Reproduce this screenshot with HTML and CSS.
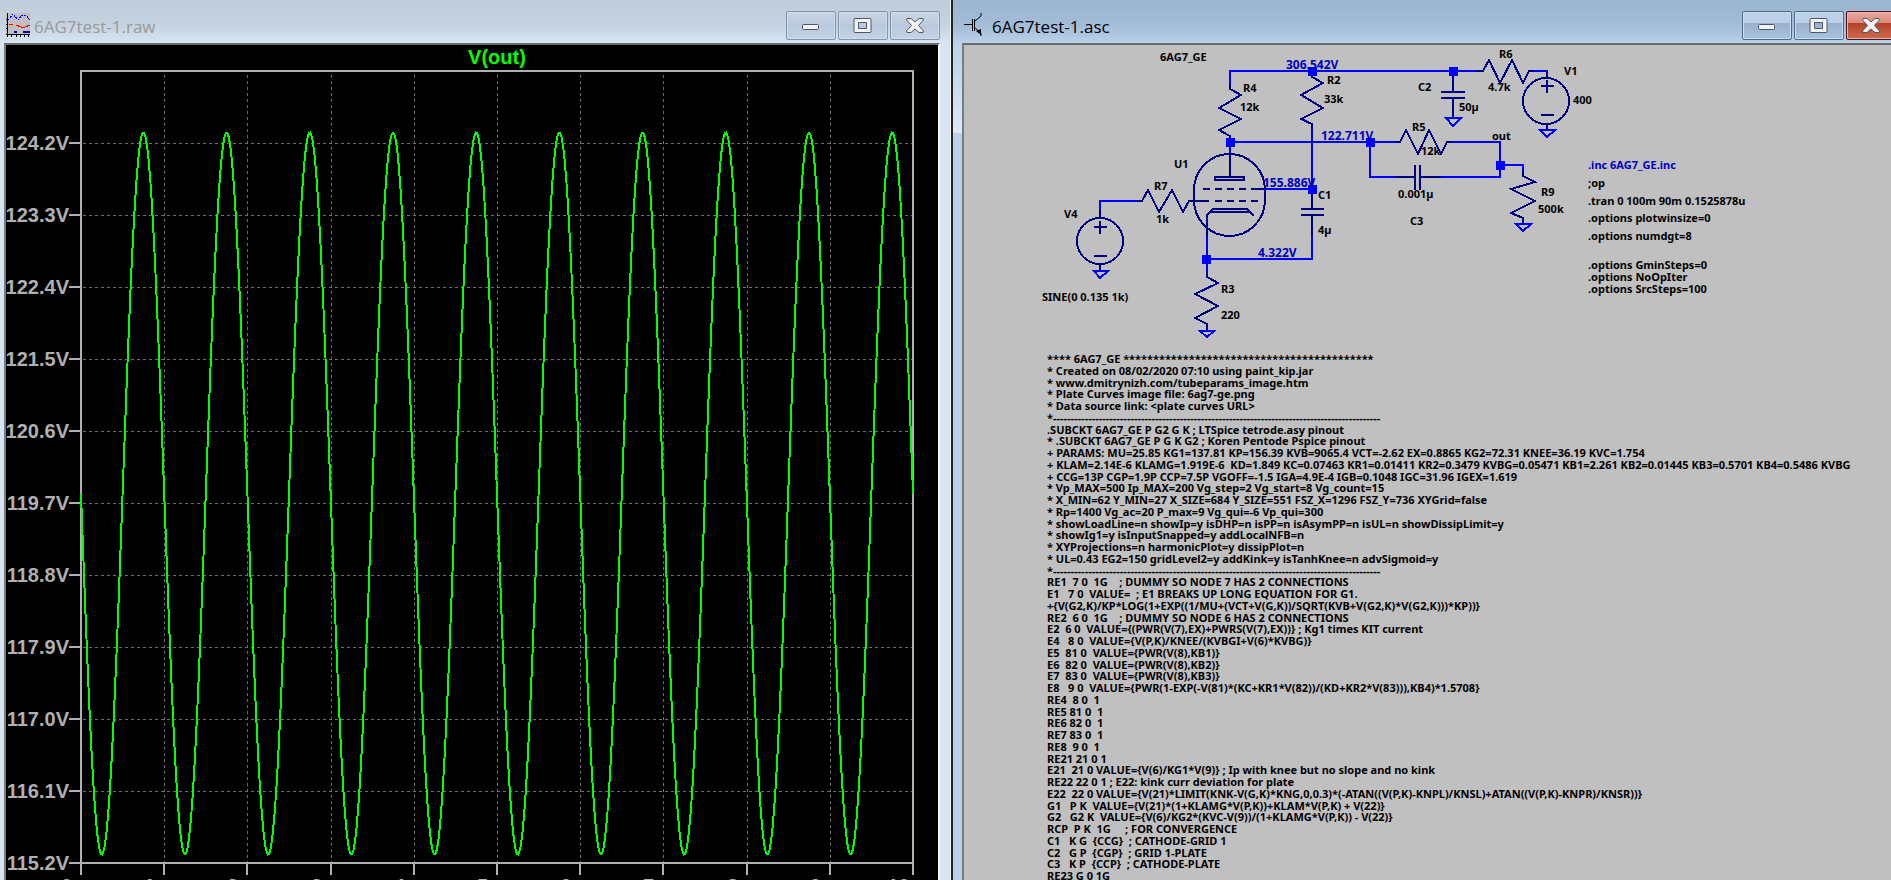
FILE: index.html
```html
<!DOCTYPE html>
<html lang="en">
  <head>
    <meta charset="utf-8" />
    <title>LTspice - 6AG7test-1</title>
    <link rel="stylesheet" href="styles.css">
  </head>
  <body>
    <div class="desktop">
      <section class="window inactive">
        <header class="titlebar">
          <svg class="icon" width="24" height="24" viewBox="0 0 24 24" shape-rendering="crispEdges">
            <rect width="24" height="22" fill="#c0c0c0" />
            <path d="M1.5 0V24M0 21.5H24M0 6.5H2M0 11.5H2M0 15.5H2M5.5 22V24M10.5 22V24M14.500 22V24M18.500 22V24M22.500 22V24" fill="none" stroke="#000" />
            <path d="M2 7L7 1L12 7L16 2H20L24 7" fill="none" stroke="#00f" stroke-dasharray="2 1" />
            <path d="M3 11.500H7M10 12L15 14H19L24 12" fill="none" stroke="#f00" />
            <path d="M8 19H11M17 19H24" fill="none" stroke="#00a" stroke-width="2" />
          </svg>
          <h1 class="title">6AG7test-1.raw</h1>
          <div class="buttons">
            <button type="button" aria-label="Minimize">
              <svg width="50" height="29" viewBox="0 0 50 29"><rect x="16.500" y="13.500" width="16" height="5" rx="1" /></svg>
            </button>
            <button type="button" aria-label="Maximize">
              <svg width="50" height="29" viewBox="0 0 50 29"><path fill-rule="evenodd" d="M17 7.500H32a1 1 0 0 1 1 1V20.500a1 1 0 0 1-1 1H17a1 1 0 0 1-1-1V8.500a1 1 0 0 1 1-1ZM20.500 11.500V17.500H28.500V11.500Z" /></svg>
            </button>
            <button type="button" aria-label="Close">
              <svg width="50" height="29" viewBox="0 0 50 29"><path d="M17 7.500H21L25 11L29 7.500H33L33.500 9L28.500 14.500L33.500 20L33 21.500H29L25 18L21 21.500H17L16.500 20L21.500 14.500L16.500 9Z" /></svg>
            </button>
          </div>
        </header>
        <div class="client plot">
          <svg id="plot" viewBox="6 45 932 860">
            <g id="grid" class="grid"></g>
            <g id="ticks" class="axis"></g>
            <rect class="axis" x="81" y="71" width="832" height="792" />
            <g id="labels" class="labels"></g>
            <path id="wave" class="wave" />
            <text class="trace" x="497" y="64">V(out)</text>
          </svg>
        </div>
      </section>

      <section class="window active">
        <header class="titlebar">
          <svg class="icon" width="24" height="24" viewBox="0 0 24 24" fill="none" stroke="#000">
            <path d="M0 11.500H8M8.500 6V18M10.500 6V18M11 8L17 3V0M11 15L17 20V23" />
            <path d="M12 18L17 16V22Z" fill="#000" stroke="none" />
          </svg>
          <h1 class="title">6AG7test-1.asc</h1>
          <div class="buttons">
            <button type="button" aria-label="Minimize">
              <svg width="50" height="29" viewBox="0 0 50 29"><rect x="16.500" y="13.500" width="16" height="5" rx="1" /></svg>
            </button>
            <button type="button" aria-label="Maximize">
              <svg width="50" height="29" viewBox="0 0 50 29"><path fill-rule="evenodd" d="M17 7.500H32a1 1 0 0 1 1 1V20.500a1 1 0 0 1-1 1H17a1 1 0 0 1-1-1V8.500a1 1 0 0 1 1-1ZM20.500 11.500V17.500H28.500V11.500Z" /></svg>
            </button>
            <button type="button" class="close" aria-label="Close">
              <svg width="50" height="29" viewBox="0 0 50 29"><path d="M17 7.500H21L25 11L29 7.500H33L33.500 9L28.500 14.500L33.500 20L33 21.500H29L25 18L21 21.500H17L16.500 20L21.500 14.500L16.500 9Z" /></svg>
            </button>
          </div>
        </header>
        <div class="client sheet">
          <svg class="schematic" width="936" height="300" viewBox="964 45 936 300">
            <!-- wires -->
            <path class="wire" d="M1230 85V71H1477M1534 71H1547V77M1230 142H1396M1312 124V189H1265M1312 235V259H1207M1370 142V177H1395M1441 177H1500V142H1453M1500 165H1523V171M1100 217V201H1137M1207 235V277M1230 142V155" />
            <!-- resistors R4 R2 R5 R6 R7 R9 R3 -->
            <path class="part" d="M1230 84V89L1241 95L1219 108L1241 119L1219 130L1230 136V142" />
            <path class="part" d="M1312 71V77L1323 83L1301 95L1323 108L1301 119L1312 124V129" />
            <path class="part" d="M1395 142H1400L1406 130L1418 154L1429 130L1441 154L1447 142H1453" />
            <path class="part" d="M1477 71H1483L1489 60L1500 83L1512 60L1523 83L1529 71H1534" />
            <path class="part" d="M1137 201H1142L1148 190L1159 212L1172 190L1183 212L1189 201H1209" />
            <path class="part" d="M1523 171V176L1535 182L1511 189L1535 201L1511 213L1523 218V223" />
            <path class="part" d="M1207 272V277L1218 283L1195 294L1218 306L1195 318L1207 324V330" />
            <!-- capacitors C2 C1 C3 -->
            <path class="part" d="M1453 71V92M1441 92H1465M1441 98H1465M1453 98V118" />
            <path class="part" d="M1312 189V209M1301 209H1324M1301 215H1324M1312 215V236" />
            <path class="part" d="M1395 177H1415M1415 165V190M1420 165V190M1420 177H1441" />
            <!-- sources V1 V4 -->
            <circle class="part" cx="1546" cy="101" r="23" />
            <path class="part" d="M1547 71V78M1541 86H1554M1547 80V93M1541 115H1554M1547 123V129" />
            <circle class="part" cx="1100" cy="241" r="23" />
            <path class="part" d="M1100 210V218M1094 227H1107M1100 221V234M1094 256H1107M1100 264V270" />
            <!-- tube U1 -->
            <rect class="part" x="1194" y="154" width="71" height="82" rx="36" />
            <path class="part" d="M1230 154V176M1215 177H1244V180H1215ZM1203 189H1210M1215 189H1222M1227 189H1234M1239 189H1246M1251 189H1265M1215 201H1222M1227 201H1234M1239 201H1246M1251 201H1258" />
            <path class="part" d="M1207 236V215L1213 209H1247L1249 212H1210M1247 209L1254 216" />
            <!-- grounds -->
            <path class="ground" d="M1446 118H1461L1453 126ZM1540 130H1555L1547 137ZM1516 224H1531L1523 231ZM1200 331H1214L1207 337ZM1094 271H1108L1100 278Z" />
            <!-- junctions -->
            <path class="node" d="M1308 67h9v9h-9zM1449 67h9v9h-9zM1226 138h9v9h-9zM1366 138h9v9h-9zM1308 185h9v9h-9zM1496 161h9v9h-9zM1202 255h9v9h-9z" />

            <g class="volt">
              <text x="1286" y="69">306.542V</text>
              <text x="1321" y="140">122.711V</text>
              <text x="1263" y="187">155.886V</text>
              <text x="1258" y="257">4.322V</text>
            </g>
            <g class="name">
              <text x="1160" y="61">6AG7_GE</text>
              <text x="1243" y="92">R4</text>
              <text x="1240" y="111">12k</text>
              <text x="1327" y="84">R2</text>
              <text x="1324" y="103">33k</text>
              <text x="1418" y="91">C2</text>
              <text x="1459" y="111">50µ</text>
              <text x="1499" y="58">R6</text>
              <text x="1488" y="91">4.7k</text>
              <text x="1564" y="75">V1</text>
              <text x="1573" y="104">400</text>
              <text x="1412" y="131">R5</text>
              <text x="1421" y="155">12k</text>
              <text x="1492" y="140">out</text>
              <text x="1398" y="198">0.001µ</text>
              <text x="1410" y="225">C3</text>
              <text x="1174" y="168">U1</text>
              <text x="1154" y="190">R7</text>
              <text x="1156" y="223">1k</text>
              <text x="1318" y="199">C1</text>
              <text x="1318" y="234">4µ</text>
              <text x="1541" y="196">R9</text>
              <text x="1538" y="213">500k</text>
              <text x="1064" y="218">V4</text>
              <text x="1042" y="301">SINE(0 0.135 1k)</text>
              <text x="1221" y="293">R3</text>
              <text x="1221" y="319">220</text>
              <text class="include" x="1588" y="169">.inc 6AG7_GE.inc</text>
              <text x="1588" y="187">;op</text>
              <text x="1588" y="205">.tran 0 100m 90m 0.1525878u</text>
              <text x="1588" y="222">.options plotwinsize=0</text>
              <text x="1588" y="240">.options numdgt=8</text>
              <text x="1588" y="269">.options GminSteps=0</text>
              <text x="1588" y="281">.options NoOpIter</text>
              <text x="1588" y="293">.options SrcSteps=100</text>
            </g>
          </svg>
          <div class="netlist">
            <div>**** 6AG7_GE ******************************************</div>
            <div>* Created on 08/02/2020 07:10 using paint_kip.jar</div>
            <div>* www.dmitrynizh.com/tubeparams_image.htm</div>
            <div>* Plate Curves image file: 6ag7-ge.png</div>
            <div>* Data source link: &lt;plate curves URL&gt;</div>
            <div>*---------------------------------------------------------------------------------------------</div>
            <div>.SUBCKT 6AG7_GE P G2 G K ; LTSpice tetrode.asy pinout</div>
            <div>* .SUBCKT 6AG7_GE P G K G2 ; Koren Pentode Pspice pinout</div>
            <div>+ PARAMS: MU=25.85 KG1=137.81 KP=156.39 KVB=9065.4 VCT=-2.62 EX=0.8865 KG2=72.31 KNEE=36.19 KVC=1.754</div>
            <div>+ KLAM=2.14E-6 KLAMG=1.919E-6  KD=1.849 KC=0.07463 KR1=0.01411 KR2=0.3479 KVBG=0.05471 KB1=2.261 KB2=0.01445 KB3=0.5701 KB4=0.5486 KVBG</div>
            <div>+ CCG=13P CGP=1.9P CCP=7.5P VGOFF=-1.5 IGA=4.9E-4 IGB=0.1048 IGC=31.96 IGEX=1.619</div>
            <div>* Vp_MAX=500 Ip_MAX=200 Vg_step=2 Vg_start=8 Vg_count=15</div>
            <div>* X_MIN=62 Y_MIN=27 X_SIZE=684 Y_SIZE=551 FSZ_X=1296 FSZ_Y=736 XYGrid=false</div>
            <div>* Rp=1400 Vg_ac=20 P_max=9 Vg_qui=-6 Vp_qui=300</div>
            <div>* showLoadLine=n showIp=y isDHP=n isPP=n isAsymPP=n isUL=n showDissipLimit=y</div>
            <div>* showIg1=y isInputSnapped=y addLocalNFB=n</div>
            <div>* XYProjections=n harmonicPlot=y dissipPlot=n</div>
            <div>* UL=0.43 EG2=150 gridLevel2=y addKink=y isTanhKnee=n advSigmoid=y</div>
            <div>*---------------------------------------------------------------------------------------------</div>
            <div>RE1  7 0  1G    ; DUMMY SO NODE 7 HAS 2 CONNECTIONS</div>
            <div>E1   7 0  VALUE=  ; E1 BREAKS UP LONG EQUATION FOR G1.</div>
            <div>+{V(G2,K)/KP*LOG(1+EXP((1/MU+(VCT+V(G,K))/SQRT(KVB+V(G2,K)*V(G2,K)))*KP))}</div>
            <div>RE2  6 0  1G    ; DUMMY SO NODE 6 HAS 2 CONNECTIONS</div>
            <div>E2  6 0  VALUE={(PWR(V(7),EX)+PWRS(V(7),EX))} ; Kg1 times KIT current</div>
            <div>E4   8 0  VALUE={V(P,K)/KNEE/(KVBGI+V(6)*KVBG)}</div>
            <div>E5  81 0  VALUE={PWR(V(8),KB1)}</div>
            <div>E6  82 0  VALUE={PWR(V(8),KB2)}</div>
            <div>E7  83 0  VALUE={PWR(V(8),KB3)}</div>
            <div>E8   9 0  VALUE={PWR(1-EXP(-V(81)*(KC+KR1*V(82))/(KD+KR2*V(83))),KB4)*1.5708}</div>
            <div>RE4  8 0  1</div>
            <div>RE5 81 0  1</div>
            <div>RE6 82 0  1</div>
            <div>RE7 83 0  1</div>
            <div>RE8  9 0  1</div>
            <div>RE21 21 0 1</div>
            <div>E21  21 0 VALUE={V(6)/KG1*V(9)} ; Ip with knee but no slope and no kink</div>
            <div>RE22 22 0 1 ; E22: kink curr deviation for plate</div>
            <div>E22  22 0 VALUE={V(21)*LIMIT(KNK-V(G,K)*KNG,0,0.3)*(-ATAN((V(P,K)-KNPL)/KNSL)+ATAN((V(P,K)-KNPR)/KNSR))}</div>
            <div>G1   P K  VALUE={V(21)*(1+KLAMG*V(P,K))+KLAM*V(P,K) + V(22)}</div>
            <div>G2   G2 K  VALUE={V(6)/KG2*(KVC-V(9))/(1+KLAMG*V(P,K)) - V(22)}</div>
            <div>RCP  P K  1G     ; FOR CONVERGENCE</div>
            <div>C1   K G  {CCG}  ; CATHODE-GRID 1</div>
            <div>C2   G P  {CGP}  ; GRID 1-PLATE</div>
            <div>C3   K P  {CCP}  ; CATHODE-PLATE</div>
            <div>RE23 G 0 1G</div>
          </div>
        </div>
      </section>
    </div>
    <script src="script.js"></script>
  </body>
</html>
```
FILE: styles.css
```css
* {
  box-sizing: border-box;
}
body {
  margin: 0;
  background: #000;
  font-family: "Noto Sans", "Open Sans", sans-serif;
  overflow: hidden;
}
.desktop {
  display: grid;
  grid-template-columns: 951fr 940fr;
  height: 100vh;
  overflow: hidden;
}
.window {
  display: flex;
  flex-direction: column;
  min-width: 0;
  height: 100vh;
}
.inactive {
  padding: 0 10px 0 4px;
  background: linear-gradient(#bfcddb, #c6d3e0 26px, #d7e4f2 43px);
  border-right: 1px solid #eef3f9;
}
.active {
  padding-left: 9px;
  margin-right: -15px;
  border-left: 2px solid #222;
  background: linear-gradient(#9ab4d1, #a4bdd8 26px, #b9d1ea 43px, #dde8f5 133px, #b9d1ea 133px);
}
.titlebar {
  display: flex;
  flex: none;
  align-items: flex-start;
  height: 43px;
}
.icon {
  flex: none;
  margin: 13px 4px 0 2px;
}
.title {
  flex: 1;
  margin: 14px 0 0;
  font: 17px/26px "Open Sans", sans-serif;
  color: #000;
}
.inactive .title {
  color: #999;
}
.buttons {
  display: flex;
  gap: 2px;
  margin-top: 11px;
}
.active .buttons {
  margin-right: 10px;
}
.buttons button {
  width: 50px;
  height: 29px;
  padding: 0;
  border: 1px solid #8294ad;
  border-radius: 2px;
  background: linear-gradient(#c6d4e4, #bdcbde 50%, #b9c8dc 50%, #c4d3e6);
  box-shadow: inset 0 0 0 1px #cfdcea;
}
.buttons svg {
  display: block;
  margin: -1px;
  fill: #f4f4f4;
  stroke: #50566a;
  stroke-width: 1px;
}
.active .buttons button {
  border-color: #536b8a;
  background: linear-gradient(#bfd3e8, #b9cfe6 40%, #98b0cd 40%, #a9c3de);
  box-shadow: inset 0 0 0 1px #c9dcef;
}
.active .buttons .close {
  border-color: #431422;
  background: linear-gradient(#e8a79c, #dd8a7c 40%, #b53f28 40%, #cf6a50);
  box-shadow: inset 0 0 0 1px #eab5a8;
}
.client {
  flex: 1;
  min-height: 0;
  overflow: hidden;
  border-top: 2px solid #6b6b6b;
  border-left: 2px solid #7b7b7b;
}
.plot {
  background: #000;
  border-right: 2px solid #f4f4f4;
}
.sheet {
  background: #c0c0c0;
}
#plot {
  display: block;
  width: 100%;
}
.grid {
  stroke: #707070;
  stroke-dasharray: 3 3;
  shape-rendering: crispEdges;
}
.axis {
  fill: none;
  stroke: #b0b0b0;
  stroke-width: 2px;
  shape-rendering: crispEdges;
}
.labels,
.trace {
  font: bold 20px "Liberation Sans", Arial, sans-serif;
  fill: #b0b0b0;
}
.trace {
  fill: #00ff00;
  text-anchor: middle;
}
.labels .volts {
  text-anchor: end;
}
.labels .time {
  text-anchor: middle;
}
.wave {
  fill: none;
  stroke: #00ff00;
  stroke-width: 2px;
  shape-rendering: crispEdges;
}
.schematic {
  display: block;
}
.wire,
.part,
.ground {
  fill: none;
  stroke: #0000ff;
  stroke-width: 2px;
  shape-rendering: crispEdges;
}
.part {
  stroke: #000080;
}
.node {
  fill: #0000ff;
}
.name,
.volt {
  font: bold 11px "Noto Sans", sans-serif;
}
.volt {
  font-size: 12px;
}
.volt,
.include {
  fill: #0000c0;
}
.netlist {
  margin: 8px 0 0 83px;
  font-size: 11px;
  font-weight: bold;
  line-height: 12px;
}
.netlist div {
  height: 12px;
  white-space: pre;
}
.netlist div:nth-child(4n + 3) {
  height: 11px;
}
```
FILE: script.js
```js
const NS = "http://www.w3.org/2000/svg";
const left = 81, top_ = 71, width = 832, height = 792;
const periods = 10;

function add(parent, tag, attrs, text) {
  const el = document.createElementNS(NS, tag);
  for (const key in attrs) el.setAttribute(key, attrs[key]);
  if (text) el.textContent = text;
  document.getElementById(parent).appendChild(el);
}

// vertical divisions, 1ms each
for (let i = 0; i <= periods; i++) {
  const x = Math.round(left + (i * width) / periods);
  if (i > 0 && i < periods) {
    add("grid", "path", { d: `M${x + 0.5} 75V862` });
  }
  add("ticks", "path", { d: `M${x} 863V875` });
  add("labels", "text", { class: "time", x: x, y: 893 }, i + "ms");
}

// horizontal divisions, 0.9V each
for (let i = 0; i <= 10; i++) {
  const y = top_ + 72 + i * 72;
  if (i < 10) {
    add("grid", "path", { d: `M83 ${y + 0.5}H912` });
  }
  add("ticks", "path", { d: `M69 ${y}H81` });
  add("labels", "text", { class: "volts", x: 69, y: y + 7 }, (124.2 - i * 0.9).toFixed(1) + "V");
}

let d = "";
for (let x = 0; x <= width; x++) {
  const y = 493.5 + 361 * Math.sin((2 * Math.PI * x * periods) / width);
  d += (x ? "L" : "M") + (left + x) + " " + y.toFixed(1);
}
document.getElementById("wave").setAttribute("d", d);
```
